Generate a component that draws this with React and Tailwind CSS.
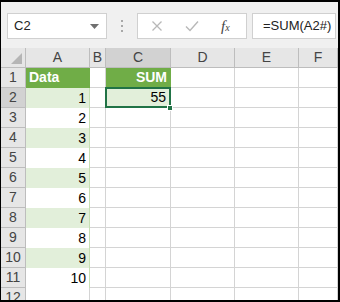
import React from "react";

const cols = ["A", "B", "C", "D", "E", "F"];
const data = [1, 2, 3, 4, 5, 6, 7, 8, 9, 10];

const gridLine = "border-r border-b border-[#d4d4d4]";

const Cell = ({ row, col }) => {
  // header row of the table
  if (row === 1 && col === "A") {
    return (
      <div className="bg-[#70ad47] border-r border-b border-[#70ad47] text-white font-bold text-[14px] pl-[3px] flex items-center">
        Data
      </div>
    );
  }
  if (row === 1 && col === "C") {
    return (
      <div className="bg-[#70ad47] border-r border-b border-[#70ad47] text-white font-bold text-[14px] pr-[3px] flex items-center justify-end">
        SUM
      </div>
    );
  }
  if (col === "A" && row >= 2 && row <= 11) {
    const value = data[row - 2];
    const band = row % 2 === 0 ? "bg-[#e2efda]" : "bg-white";
    return (
      <div className={`${band} border-r border-[#c6e0b4] text-[14px] pr-[3px] flex items-center justify-end`}>
        {value}
      </div>
    );
  }
  if (row === 2 && col === "C") {
    return (
      <div className={`relative bg-[#e2efda] ${gridLine} text-[14px] pr-[4px] flex items-center justify-end`}>
        55
        <div className="absolute -left-px -top-px -right-px -bottom-px border-2 border-[#217346]" />
        <div className="absolute -right-[3px] -bottom-[4px] w-[6px] h-[6px] bg-[#217346] border border-white" />
      </div>
    );
  }
  return <div className={`bg-white ${gridLine}`} />;
};

const Toolbar = () => (
  <div className="h-[46px] shrink-0 bg-[#f0f0f0] flex items-start pt-[11px] pl-[6px] pr-[2px]">
    <div className="w-[100px] h-[26px] bg-white border border-[#d0d0d0] flex items-center pl-[6px] pr-[7px] text-[13px] text-[#222]">
      <span className="flex-1">C2</span>
      <svg width="9" height="5" viewBox="0 0 9 5">
        <path d="M0 0h9L4.5 5z" fill="#6f6f6f" />
      </svg>
    </div>
    <div className="w-[30px] h-[26px] flex flex-col items-center justify-center gap-[3px]">
      <span className="w-[2px] h-[2px] bg-[#a8a8a8]" />
      <span className="w-[2px] h-[2px] bg-[#a8a8a8]" />
      <span className="w-[2px] h-[2px] bg-[#a8a8a8]" />
    </div>
    <div className="w-[110px] h-[26px] bg-white border border-[#d0d0d0] flex items-center">
      <svg width="12" height="12" viewBox="0 0 12 12" className="ml-[13px]">
        <path d="M1.5 1.5l9 9M10.5 1.5l-9 9" stroke="#b8b8b8" strokeWidth="1.3" />
      </svg>
      <svg width="14" height="12" viewBox="0 0 14 12" className="ml-[22px]">
        <path d="M1 6.5l4 4L13 1.5" stroke="#b8b8b8" strokeWidth="1.4" fill="none" />
      </svg>
      <span className="ml-[22px] text-[15px] italic text-[#444] font-['Liberation_Serif',serif] leading-none">
        f<span className="text-[10px]">x</span>
      </span>
    </div>
    <div className="ml-[5px] flex-1 h-[26px] bg-white border border-[#d0d0d0] flex items-center pl-[10px] text-[13px] text-[#222]">
      =SUM(A2#)
    </div>
  </div>
);

export default function App() {
  const rows = Array.from({ length: 12 }, (_, i) => i + 1);
  return (
    <div className="w-[340px] h-[302px] border-t-2 border-l border-r-2 border-b-2 border-black bg-[#f0f0f0] flex flex-col overflow-hidden font-['Liberation_Sans',Arial,sans-serif]">
      <Toolbar />
      <div className="flex-1 overflow-hidden bg-white">
        <div className="grid grid-cols-[25px_64px_16px_65px_64px_64px_1fr] auto-rows-[20px]">
          {/* corner */}
          <div className="bg-[#e6e6e6] border-r border-b border-[#bdbdbd] flex items-end justify-end pr-[3px] pb-[3px]">
            <svg width="11" height="11" viewBox="0 0 11 11">
              <path d="M11 0v11H0z" fill="#b5b5b5" />
            </svg>
          </div>
          {cols.map((c) => (
            <div
              key={c}
              className={`${c === "C" ? "bg-[#d2d2d2]" : "bg-[#e6e6e6]"} border-r border-b border-[#bdbdbd] text-[14px] text-[#444] flex items-center justify-center`}
            >
              {c}
            </div>
          ))}

          {rows.map((r) => (
            <React.Fragment key={r}>
              <div
                className={`${r === 2 ? "bg-[#d2d2d2]" : "bg-[#e6e6e6]"} border-r border-b border-[#bdbdbd] text-[14px] text-[#444] flex items-center justify-center`}
              >
                {r}
              </div>
              {cols.map((c) => (
                <Cell key={c} row={r} col={c} />
              ))}
            </React.Fragment>
          ))}
        </div>
      </div>
    </div>
  );
}
